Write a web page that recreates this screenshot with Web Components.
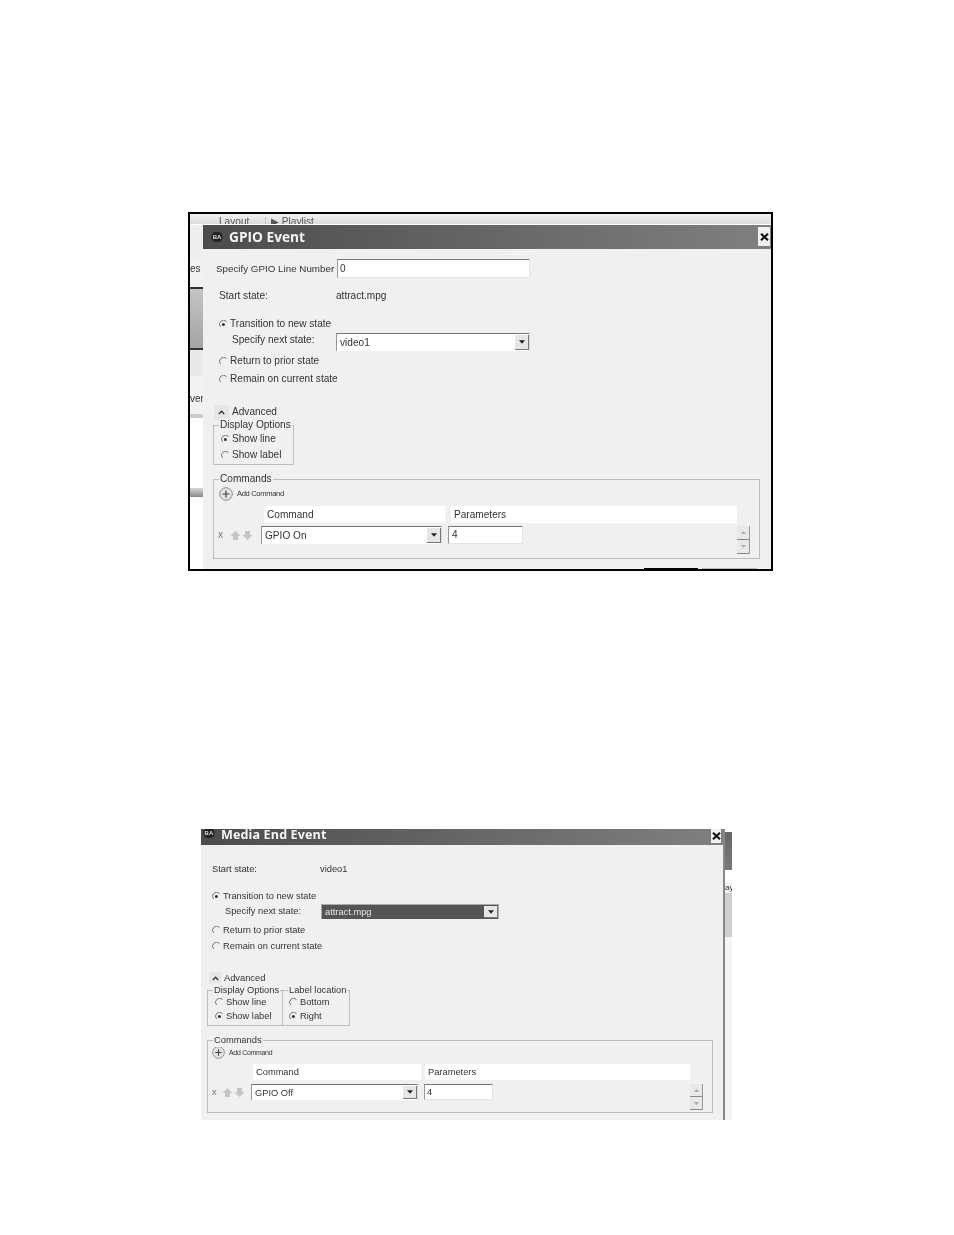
<!DOCTYPE html>
<html>
<head>
<meta charset="utf-8">
<title>GPIO and Media End events</title>
<style>
  html, body { margin: 0; background: #fff; }
  body { height: 1235px; overflow: hidden; }
  gpio-shot { margin: 212px 0 0 188px; }
  media-shot { margin: 257px 0 0 201px; }
</style>
</head>
<body>
<gpio-shot></gpio-shot>
<media-shot></media-shot>

<script>
const RADIO_ON = `<svg width="9" height="9" viewBox="0 0 9 9"><path d="M7.5 1.6A3.7 3.7 0 0 0 1.6 7" fill="none" stroke="#777" stroke-width="1"/><circle cx="4.4" cy="4.4" r="1.5" fill="#333"/></svg>`;
const RADIO_OFF = `<svg width="9" height="9" viewBox="0 0 9 9"><path d="M7.5 1.6A3.7 3.7 0 0 0 1.6 7" fill="none" stroke="#777" stroke-width="1"/></svg>`;

class UiRadio extends HTMLElement {
    constructor() {
        super();
        this.attachShadow({ mode: 'open' });
        this.shadowRoot.innerHTML = `
            <style>
                :host { display: flex; align-items: center; height: var(--line, 16px); white-space: nowrap; }
                svg { display: block; flex: none; }
                .mark { width: var(--radio-w, 11px); flex: none; }
            </style>
            <span class="mark">${this.hasAttribute('checked') ? RADIO_ON : RADIO_OFF}</span><slot></slot>
        `;
    }
}

class UiField extends HTMLElement {
    constructor() {
        super();
        this.attachShadow({ mode: 'open' });
        this.shadowRoot.innerHTML = `
            <style>
                :host {
                    display: flex;
                    align-items: center;
                    box-sizing: border-box;
                    background: #fff;
                    border-top: 1px solid #777;
                    border-left: 1px solid #999;
                    border-right: 1px solid #e4e4e4;
                    border-bottom: 1px solid #e4e4e4;
                    padding-left: 2px;
                    color: #333;
                    white-space: nowrap;
                }
            </style>
            <slot></slot>
        `;
    }
}

class UiCombo extends HTMLElement {
    constructor() {
        super();
        this.attachShadow({ mode: 'open' });
        this.shadowRoot.innerHTML = `
            <style>
                :host {
                    display: flex;
                    box-sizing: border-box;
                    background: #fff;
                    border-top: 1px solid #777;
                    border-left: 1px solid #999;
                    border-right: 1px solid #ddd;
                    color: #333;
                    white-space: nowrap;
                }
                :host([selected]) { background: #555; color: #e8e8e8; border-color: #aaa; }
                .value { flex: 1; padding-left: 3px; align-self: center; }
                .btn {
                    flex: none;
                    width: 13px;
                    margin: 1px 0;
                    display: flex;
                    align-items: center;
                    justify-content: center;
                    background: #e6e6e6;
                    border-right: 1px solid #777;
                    border-bottom: 1px solid #777;
                }
                svg { display: block; }
            </style>
            <span class="value"><slot></slot></span>
            <span class="btn"><svg width="6" height="4" viewBox="0 0 7 4"><path d="M0 0h7L3.5 4z" fill="#222"/></svg></span>
        `;
    }
}

class UiGroup extends HTMLElement {
    constructor() {
        super();
        this.attachShadow({ mode: 'open' });
        this.shadowRoot.innerHTML = `
            <style>
                :host {
                    display: block;
                    position: relative;
                    box-sizing: border-box;
                    border: 1px solid #bdbdbd;
                }
                .legend {
                    position: absolute;
                    top: -8px;
                    left: 5px;
                    padding: 0 1px;
                    line-height: 14px;
                    background: #f0f0f0;
                    white-space: nowrap;
                }
            </style>
            <span class="legend">${this.getAttribute('legend')}</span>
            <slot></slot>
        `;
    }
}

class UiAdd extends HTMLElement {
    constructor() {
        super();
        this.attachShadow({ mode: 'open' });
        this.shadowRoot.innerHTML = `
            <style>
                :host { display: flex; align-items: center; gap: 4px; height: var(--add-size, 14px); }
                svg { display: block; width: var(--add-size, 14px); height: var(--add-size, 14px); }
                span { font-family: "Liberation Sans", Arial, sans-serif; font-size: var(--add-font, 7.6px); color: #333; letter-spacing: var(--add-track, -.35px); white-space: nowrap; }
            </style>
            <svg viewBox="0 0 14 14">
                <circle cx="7" cy="7" r="6.3" fill="#e4e4e4" stroke="#8a8a8a"/>
                <path d="M7 3.5v7M3.5 7h7" stroke="#444" stroke-width="1.2"/>
            </svg>
            <span><slot></slot></span>
        `;
    }
}

class UiMover extends HTMLElement {
    constructor() {
        super();
        this.attachShadow({ mode: 'open' });
        this.shadowRoot.innerHTML = `
            <style>
                :host { display: flex; flex: none; }
                span { width: 12px; display: flex; justify-content: center; }
                svg { display: block; }
            </style>
            <span><svg width="11" height="11" viewBox="0 0 11 11"><path d="M5.5 1L10.500 6H8v4H3V6H.5z" fill="#c4c4c4"/></svg></span>
            <span><svg width="11" height="11" viewBox="0 0 11 11"><path d="M5.500 10L.5 5H3V1h5v4h2.500z" fill="#c4c4c4"/></svg></span>
        `;
    }
}

class UiSpin extends HTMLElement {
    constructor() {
        super();
        this.attachShadow({ mode: 'open' });
        this.shadowRoot.innerHTML = `
            <style>
                :host { display: flex; flex-direction: column; flex: none; width: 13px; }
                span {
                    flex: 1;
                    display: flex;
                    align-items: center;
                    justify-content: center;
                    background: #e8e8e8;
                    border-right: 1px solid #999;
                    border-bottom: 1px solid #888;
                }
                svg { display: block; }
            </style>
            <span><svg width="5" height="3" viewBox="0 0 5 3"><path d="M0 3L2.500 0 5 3z" fill="#aaa"/></svg></span>
            <span><svg width="5" height="3" viewBox="0 0 5 3"><path d="M0 0h5L2.500 3z" fill="#aaa"/></svg></span>
        `;
    }
}

class UiToggle extends HTMLElement {
    constructor() {
        super();
        this.attachShadow({ mode: 'open' });
        this.shadowRoot.innerHTML = `
            <style>
                :host { display: flex; align-items: center; }
                .box {
                    flex: none;
                    width: var(--toggle, 15px);
                    height: var(--toggle, 15px);
                    margin-right: var(--toggle-gap, 3px);
                    background: #e6e6e6;
                    display: flex;
                    align-items: center;
                    justify-content: center;
                }
                svg { display: block; }
            </style>
            <span class="box"><svg width="7" height="5" viewBox="0 0 7 5"><path d="M.8 4L3.500 1.200 6.200 4" fill="none" stroke="#333" stroke-width="1.300"/></svg></span>
            <slot></slot>
        `;
    }
}

class TitleBar extends HTMLElement {
    constructor() {
        super();
        this.attachShadow({ mode: 'open' });
        this.shadowRoot.innerHTML = `
            <style>
                :host {
                    display: flex;
                    align-items: center;
                    position: relative;
                    overflow: hidden;
                    background: linear-gradient(90deg, #4c4c4c, #808080);
                    color: #f4f4f4;
                    font-family: "Open Sans", sans-serif;
                    font-weight: 700;
                    white-space: nowrap;
                }
                svg { display: block; flex: none; }
                .x {
                    position: absolute;
                    background: #f0f0f0;
                    display: flex;
                    align-items: center;
                    justify-content: center;
                }
            </style>
            <svg class="logo" width="12" height="12" viewBox="0 0 12 12">
                <rect x=".5" y="1" width="11" height="10" rx="4.500" fill="#222"/>
                <text x="6" y="8.200" text-anchor="middle" font-family="Liberation Sans" font-size="6" font-weight="bold" fill="#ddd">BA</text>
            </svg>
            <slot></slot>
            <span class="x"><svg width="9" height="8" viewBox="0 0 9 8"><path d="M1 .8L8 7.200M8 .8L1 7.200" stroke="#111" stroke-width="2.100"/></svg></span>
        `;
    }
}

const SHARED = `
    :host { display: block; font-family: "Liberation Sans", Arial, sans-serif; color: #333; }
    .row { display: flex; white-space: nowrap; }
    .white { background: #fff; line-height: 17px; padding-left: 3px; box-sizing: border-box; white-space: nowrap; }
    .center { align-self: center; }
    ui-field, ui-combo, ui-group { flex: none; }
    .dialog { background: #f0f0f0; display: flex; flex-direction: column; overflow: hidden; min-width: 0; }
    .dialog > * { flex: none; }
`;

class GpioShot extends HTMLElement {
    constructor() {
        super();
        this.attachShadow({ mode: 'open' });
        this.shadowRoot.innerHTML = `
            <style>
                ${SHARED}
                :host { font-size: 10.1px; --line: 16px; line-height: 16px; }
                .frame {
                    width: 585px;
                    height: 359px;
                    box-sizing: border-box;
                    border: 2px solid #000;
                    display: grid;
                    grid-template-columns: 13px 1fr;
                    grid-template-rows: 11px 1fr;
                    overflow: hidden;
                    background: #f0f0f0;
                    filter: blur(.3px);
                }
                .top {
                    grid-column: 1 / 3;
                    background: linear-gradient(#f2f2f2, #dcdcdc);
                    color: #555;
                    padding: 0 0 0 29px;
                    display: flex;
                    border-bottom: 1px solid #fff;
                    overflow: hidden;
                    box-sizing: border-box;
                }
                .left { display: flex; flex-direction: column; overflow: hidden; font-size: 10px; background: #fff; color: #333; }
                .left div { flex: none; }
                title-bar { height: 24px; font-size: 13.7px; padding-left: 8px; gap: 6px; }
                .grp-display { width: 81px; height: 40px; margin: 5px 0 0 10px; padding: 5px 0 0 7px; }
                .grp-commands { width: 547px; height: 80px; margin: 14px 0 0 10px; padding: 7px 0 0 5px; }
            </style>
            <div class="frame">
                <div class="top"><span style="width:45px">Layout</span><span style="width:7px;color:#bbb">|</span><span>&#9654; Playlist</span></div>
                <div class="left">
                    <div style="height:36px;background:#eee"></div>
                    <div style="height:26px;background:#f2f2f2;line-height:16px;text-align:right;padding-right:5px;overflow:hidden;box-sizing:border-box">es</div>
                    <div style="height:63px;border-top:2px solid #333;border-bottom:2px solid #333;box-sizing:border-box;background:linear-gradient(#c4c4c4,#a4a4a4)"></div>
                    <div style="height:26px;background:#e8e8e8"></div>
                    <div style="height:42px;background:#f2f2f2;line-height:46px;text-align:right;overflow:hidden;border-bottom:4px solid #ccc;box-sizing:border-box">ver</div>
                    <div style="height:70px;background:#fff"></div>
                    <div style="height:9px;background:linear-gradient(#d8d8d8,#888)"></div>
                    <div style="flex:1;background:#fff"></div>
                </div>
                <div class="dialog">
                    <title-bar>GPIO Event</title-bar>
                    <div class="row" style="margin:10px 0 0 13px">
                        <span class="center" style="width:121px;font-size:9.8px">Specify GPIO Line Number</span>
                        <ui-field style="width:193px;height:19px">0</ui-field>
                    </div>
                    <div class="row" style="margin:10px 0 0 16px">
                        <span style="width:117px">Start state:</span><span>attract.mpg</span>
                    </div>
                    <ui-radio checked style="margin:12px 0 0 16px">Transition to new state</ui-radio>
                    <div class="row" style="margin:1px 0 0 29px">
                        <span style="width:104px;margin-top:-1px">Specify next state:</span>
                        <ui-combo style="width:194px;height:18px">video1</ui-combo>
                    </div>
                    <ui-radio style="margin:2px 0 0 16px">Return to prior state</ui-radio>
                    <ui-radio style="margin:2px 0 0 16px">Remain on current state</ui-radio>
                    <ui-toggle style="margin:17px 0 0 11px">Advanced</ui-toggle>
                    <ui-group class="grp-display" legend="Display Options">
                        <ui-radio checked>Show line</ui-radio>
                        <ui-radio>Show label</ui-radio>
                    </ui-group>
                    <ui-group class="grp-commands" legend="Commands">
                        <ui-add>Add Command</ui-add>
                        <div class="row" style="margin:5px 0 0 45px;gap:6px;height:17px">
                            <div class="white" style="width:181px">Command</div>
                            <div class="white" style="width:286px">Parameters</div>
                        </div>
                        <div class="row" style="margin:3px 0 0 -1px">
                            <span style="width:11px;height:18px;line-height:18px;flex:none;color:#777">x</span>
                            <ui-mover style="height:18px;align-items:center;margin-right:8px"></ui-mover>
                            <ui-combo style="width:181px;height:18px">GPIO On</ui-combo>
                            <ui-field style="width:75px;height:18px;margin-left:6px;padding-left:3px">4</ui-field>
                            <ui-spin style="height:28px;margin-left:214px"></ui-spin>
                        </div>
                    </ui-group>
                    <div class="row" style="margin:9px 0 0 441px;gap:4px">
                        <div style="width:54px;height:6px;border:1px solid #000;box-sizing:border-box;background:#fff"></div>
                        <div style="width:55px;height:6px;border:1px solid #bbb;box-sizing:border-box"></div>
                    </div>
                </div>
            </div>
        `;
        const x = this.shadowRoot.querySelector('title-bar').shadowRoot.querySelector('.x');
        x.style.cssText = 'right:1px;top:2px;width:12px;height:19px';
    }
}

class MediaShot extends HTMLElement {
    constructor() {
        super();
        this.attachShadow({ mode: 'open' });
        this.shadowRoot.innerHTML = `
            <style>
                ${SHARED}
                :host {
                    font-size: 9.3px;
                    --line: 14px;
                    line-height: 16px;
                    --radio-w: 11px;
                    --toggle: 12px;
                    --add-size: 13px;
                    --add-font: 6.9px;
                    --add-track: -.25px;
                }
                .frame {
                    width: 531px;
                    height: 292px;
                    box-sizing: border-box;
                    padding-top: 1px;
                    display: grid;
                    grid-template-columns: 522px 9px;
                    overflow: hidden;
                    filter: blur(.3px);
                }
                .right { border-left: 2px solid #888; display: flex; flex-direction: column; overflow: hidden; font-size: 8px; background: #f6f6f6; }
                .right div { flex: none; }
                title-bar { height: 16px; font-size: 12.6px; padding: 0 0 3px 2px; box-sizing: border-box; gap: 6px; align-items: flex-end; line-height: 14px; letter-spacing: .1px; }
                .grp-display { width: 76px; height: 36px; padding: 4px 0 0 7px; }
                .grp-label { width: 68px; height: 36px; margin-left: -1px; padding: 4px 0 0 6px; }
                .grp-commands { width: 506px; height: 73px; margin: 14px 0 0 6px; padding: 5px 0 0 4px; }
            </style>
            <div class="frame">
                <div class="dialog">
                    <title-bar>Media End Event</title-bar>
                    <div class="row" style="margin:16px 0 0 11px">
                        <span style="width:108px">Start state:</span><span>video1</span>
                    </div>
                    <ui-radio checked style="margin:12px 0 0 11px">Transition to new state</ui-radio>
                    <div class="row" style="margin:1px 0 0 24px">
                        <span style="width:96px;margin-top:-1px">Specify next state:</span>
                        <ui-combo selected style="width:178px;height:15px">attract.mpg</ui-combo>
                    </div>
                    <ui-radio style="margin:4px 0 0 11px">Return to prior state</ui-radio>
                    <ui-radio style="margin:2px 0 0 11px">Remain on current state</ui-radio>
                    <ui-toggle style="margin:17px 0 0 8px">Advanced</ui-toggle>
                    <div class="row" style="margin:4px 0 0 6px">
                        <ui-group class="grp-display" legend="Display Options">
                            <ui-radio>Show line</ui-radio>
                            <ui-radio checked>Show label</ui-radio>
                        </ui-group>
                        <ui-group class="grp-label" legend="Label location">
                            <ui-radio>Bottom</ui-radio>
                            <ui-radio checked>Right</ui-radio>
                        </ui-group>
                    </div>
                    <ui-group class="grp-commands" legend="Commands">
                        <ui-add>Add Command</ui-add>
                        <div class="row" style="margin:5px 0 0 41px;gap:4px;height:16px;line-height:16px">
                            <div class="white" style="width:168px;line-height:16px">Command</div>
                            <div class="white" style="width:265px;line-height:16px">Parameters</div>
                        </div>
                        <div class="row" style="margin-top:4px">
                            <span style="width:9px;height:16px;line-height:16px;flex:none;color:#777">x</span>
                            <ui-mover style="height:16px;align-items:center;margin-right:6px"></ui-mover>
                            <ui-combo style="width:167px;height:16px">GPIO Off</ui-combo>
                            <ui-field style="width:69px;height:16px;margin-left:6px">4</ui-field>
                            <ui-spin style="height:26px;margin-left:197px"></ui-spin>
                        </div>
                    </ui-group>
                </div>
                <div class="right">
                    <div style="height:3px;background:#fff"></div>
                    <div style="height:38px;background:linear-gradient(#666,#7a7a7a)"></div>
                    <div style="height:13px;background:#fff"></div>
                    <div style="height:10px;line-height:10px;overflow:hidden;background:#f0f0f0">ay</div>
                    <div style="height:44px;background:#cfcfcf"></div>
                    <div style="flex:1;background:#f4f4f4"></div>
                </div>
            </div>
        `;
        const bar = this.shadowRoot.querySelector('title-bar');
        bar.shadowRoot.querySelector('.x').style.cssText = 'right:2px;top:0;width:10px;height:14px';
        bar.shadowRoot.querySelector('.logo').style.cssText = 'align-self:flex-start;margin-top:-2px';
    }
}

customElements.define('ui-radio', UiRadio);
customElements.define('ui-field', UiField);
customElements.define('ui-combo', UiCombo);
customElements.define('ui-group', UiGroup);
customElements.define('ui-add', UiAdd);
customElements.define('ui-mover', UiMover);
customElements.define('ui-spin', UiSpin);
customElements.define('ui-toggle', UiToggle);
customElements.define('title-bar', TitleBar);
customElements.define('gpio-shot', GpioShot);
customElements.define('media-shot', MediaShot);
</script>
</body>
</html>
